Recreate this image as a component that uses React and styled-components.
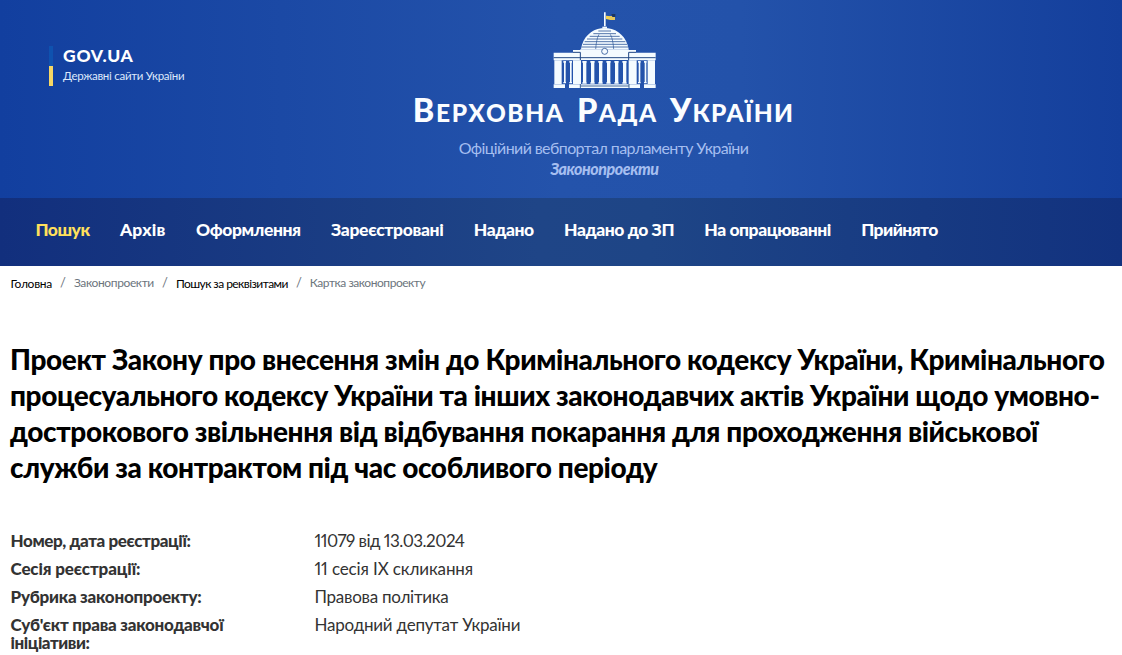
import React from "react";
import styled, { createGlobalStyle } from "styled-components";

const GlobalStyle = createGlobalStyle`
  *, *::before, *::after { box-sizing: border-box; }
  html, body { margin: 0; padding: 0; }
  body {
    background: #fff;
    font-family: Lato, "Open Sans", sans-serif;
    color: #000;
    overflow: hidden;
  }
`;

const Page = styled.div`
  width: 1122px;
  height: 655px;
  overflow: hidden;
  background: #fff;
`;

const Header = styled.header`
  display: grid;
  grid-template-columns: 330px 547px;
  height: 198px;
  background: linear-gradient(90deg, #123f9f 0%, #2453ab 50%, #2352aa 66%, #143f9c 100%);
`;

const GovLink = styled.a`
  display: flex;
  gap: 10px;
  height: 40px;
  margin: 46px 0 0 49px;
  color: #fff;
  text-decoration: none;
`;

const FlagBar = styled.span`
  width: 4px;
  height: 40px;
  background: linear-gradient(#0f52af 50%, #f6d765 50%);
`;

const GovText = styled.span`
  display: flex;
  flex-direction: column;
  white-space: nowrap;
`;

const GovName = styled.span`
  font-size: 17.5px;
  line-height: 20px;
  font-weight: 900;
  letter-spacing: 0.7px;
`;

const GovNote = styled.span`
  font-size: 11.5px;
  line-height: 20px;
  letter-spacing: -0.27px;
  color: #dde8fb;
`;

const Brand = styled.div`
  display: flex;
  flex-direction: column;
  align-items: center;
  padding-top: 10px;
  white-space: nowrap;
`;

const Emblem = styled.svg`
  display: block;
  width: 103px;
  height: 79px;
  margin-left: 2px;
`;

const SiteName = styled.h2`
  display: flex;
  gap: 12.5px;
  margin: 0;
  height: 44px;
  line-height: 42px;
  font-size: 24.5px;
  font-weight: 900;
  color: #fbfdff;
`;

const Word = styled.span`
  display: block;
  text-transform: uppercase;
  letter-spacing: ${(p) => p.$track}px;
  &::first-letter { font-size: 32.5px; }
`;

const Tagline = styled.div`
  margin-top: 4px;
  font-size: 16px;
  line-height: 21px;
  letter-spacing: -0.6px;
  color: #a5bef0;
`;

const Section = styled.div`
  padding-left: 2px;
  font-size: 16px;
  line-height: 21px;
  font-weight: 900;
  font-style: italic;
  letter-spacing: -0.45px;
  color: #a5bef0;
`;

const Nav = styled.nav`
  display: flex;
  gap: 30.3px;
  height: 68px;
  padding: 0 0 4px 35.5px;
  align-items: center;
  background: linear-gradient(90deg, #122f7d 0%, #1f4587 48%, #1e4586 58%, #12327f 100%);
`;

const NavItem = styled.a`
  font-size: 17.5px;
  line-height: 24px;
  font-weight: 900;
  white-space: nowrap;
  letter-spacing: ${(p) => p.$track}px;
  color: ${(p) => (p.$active ? "#ffe05c" : "#fff")};
`;

const Crumbs = styled.ol`
  display: flex;
  margin: 0;
  padding: 8px 0 0 10.5px;
  height: 75px;
  list-style: none;
  font-size: 12px;
  line-height: 17px;
  white-space: nowrap;
`;

const Crumb = styled.li`
  letter-spacing: ${(p) => p.$track}px;
  color: ${(p) => (p.$link ? "#000" : "#6c757d")};
  padding-top: ${(p) => (p.$link ? 1 : 0)}px;
`;

const Slash = styled.li`
  width: 22px;
  font-size: 13px;
  text-align: center;
  color: #6c757d;
`;

const Title = styled.h1`
  margin: 0;
  padding-left: 10px;
  font-size: 28px;
  line-height: 36px;
  font-weight: 900;
`;

const TitleLine = styled.span`
  display: block;
  white-space: nowrap;
  letter-spacing: ${(p) => p.$track}px;
`;

const Details = styled.dl`
  display: grid;
  grid-template-columns: 304px 1fr;
  row-gap: 10px;
  margin: 47px 0 0;
  padding-left: 10.5px;
  font-size: 17px;
  line-height: 18px;
  color: #333;
`;

const Term = styled.dt`
  font-weight: 900;
  white-space: nowrap;
`;

const Value = styled.dd`
  margin: 0;
  white-space: nowrap;
  letter-spacing: ${(p) => p.$track}px;
  font-feature-settings: "pnum";
`;

const TermLine = styled.span`
  display: block;
  letter-spacing: ${(p) => p.$track}px;
`;

const words = [
  { text: "Верховна", track: 1.6 },
  { text: "Рада", track: 1.3 },
  { text: "України", track: 1.3 },
];

const navItems = [
  { text: "Пошук", track: -0.5, active: true },
  { text: "Архів", track: 0.25 },
  { text: "Оформлення", track: -0.4 },
  { text: "Зареєстровані", track: -0.33 },
  { text: "Надано", track: -0.43 },
  { text: "Надано до ЗП", track: -0.45 },
  { text: "На опрацюванні", track: -0.46 },
  { text: "Прийнято", track: -0.6 },
];

const crumbs = [
  { text: "Головна", track: -0.3, link: true },
  { text: "Законопроекти", track: -0.38 },
  { text: "Пошук за реквізитами", track: -0.55, link: true },
  { text: "Картка законопроекту", track: -0.46 },
];

const titleLines = [
  { text: "Проект Закону про внесення змін до Кримінального кодексу України, Кримінального", track: -0.37 },
  { text: "процесуального кодексу України та інших законодавчих актів України щодо умовно-", track: -0.4 },
  { text: "дострокового звільнення від відбування покарання для проходження військової", track: -0.39 },
  { text: "служби за контрактом під час особливого періоду", track: -0.39 },
];

const details = [
  { term: [["Номер, дата реєстрації:", -0.4]], value: "11079 від 13.03.2024", track: -0.52 },
  { term: [["Сесія реєстрації:", -0.13]], value: "11 сесія IX скликання", track: -0.13 },
  { term: [["Рубрика законопроекту:", -0.25]], value: "Правова політика", track: -0.27 },
  {
    term: [["Суб'єкт права законодавчої", -0.25], ["ініціативи:", -0.45]],
    value: "Народний депутат України",
    track: -0.22,
  },
];

const columnXs = [157, 181, 205, 229, 253, 277];

function Parliament() {
  return (
    <Emblem viewBox="69 30 309 237" aria-hidden="true">
      <path d="M222 37h5v42h-5z" fill="#f4fbff" />
      <path d="M228 47l14 2v11l-14-3z" fill="#f3d24e" />
      <path d="M239 48h16v12h-16z" fill="#e5c65c" />
      <path d="M244 42h12v9h-9z" fill="#1b3562" />
      <path d="M217 80h14v6h-14z" fill="#f4fbff" />
      <path d="M153 148C158 112 184 88 214 85h20c30 3 56 27 62 63z" fill="#f4fbff" />
      <g stroke="#2b5496" strokeWidth="2.4" fill="none">
        <path d="M205 93h38M190 101h68M179 109h90M171 117h106M164 125h122M159 133h132M155 141h139" />
        <path d="M207 103c-6 10-9 28-10 45M241 103c6 10 9 28 10 45" strokeWidth="2" />
      </g>
      <path d="M129 150h189v8H129z" fill="#f4fbff" />
      <path d="M151 148h145v32H151z" fill="#f4fbff" />
      <path d="M71 158h80v23H71zM296 158h81v23h-81z" fill="#f4fbff" />
      <path d="M71 173h306M151 157v24M296 157v24M151 157h-22M296 157h22" stroke="#254b86" strokeWidth="3" />
      <circle cx="224" cy="154" r="9" fill="#f4fbff" stroke="#2b5496" strokeWidth="2.5" />
      <path d="M73 181h22v71H73zM129 181h24v71h-24zM296 181h24v71h-24zM353 181h22v71h-22z" fill="#f4fbff" />
      <g fill="#f4fbff">
        {[101, 119, 325, 343].map((x) => (
          <path key={x} d={`M${x - 1} 183h8v5h-8zM${x + 1} 188h5v58h-5zM${x - 1} 246h8v4h-8z`} />
        ))}
        {columnXs.map((x) => (
          <path key={x} d={`M${x} 183h13v5h-13zM${x + 2} 188h10v59h-10zM${x} 247h13v4h-13z`} />
        ))}
      </g>
      <path d="M71 253h34v11H71zM117 253h213v11H117zM342 253h35v11h-35z" fill="#f4fbff" />
      <path d="M151 258h146M151 252v12M297 252v12" stroke="#254b86" strokeWidth="2.5" />
    </Emblem>
  );
}

export default function App() {
  return (
    <Page>
      <GlobalStyle />
      <Header>
        <GovLink>
          <FlagBar />
          <GovText>
            <GovName>GOV.UA</GovName>
            <GovNote>Державні сайти України</GovNote>
          </GovText>
        </GovLink>
        <Brand>
          <Parliament />
          <SiteName>
            {words.map((w) => (
              <Word key={w.text} $track={w.track}>{w.text}</Word>
            ))}
          </SiteName>
          <Tagline>Офіційний вебпортал парламенту України</Tagline>
          <Section>Законопроекти</Section>
        </Brand>
      </Header>
      <Nav>
        {navItems.map((n) => (
          <NavItem key={n.text} $track={n.track} $active={n.active}>{n.text}</NavItem>
        ))}
      </Nav>
      <Crumbs>
        {crumbs.map((c, i) => (
          <React.Fragment key={c.text}>
            {i > 0 && <Slash>/</Slash>}
            <Crumb $track={c.track} $link={c.link}>{c.text}</Crumb>
          </React.Fragment>
        ))}
      </Crumbs>
      <Title>
        {titleLines.map((l) => (
          <TitleLine key={l.text} $track={l.track}>{l.text}</TitleLine>
        ))}
      </Title>
      <Details>
        {details.map((d) => (
          <React.Fragment key={d.value}>
            <Term>
              {d.term.map(([text, track]) => (
                <TermLine key={text} $track={track}>{text}</TermLine>
              ))}
            </Term>
            <Value $track={d.track}>{d.value}</Value>
          </React.Fragment>
        ))}
      </Details>
    </Page>
  );
}
